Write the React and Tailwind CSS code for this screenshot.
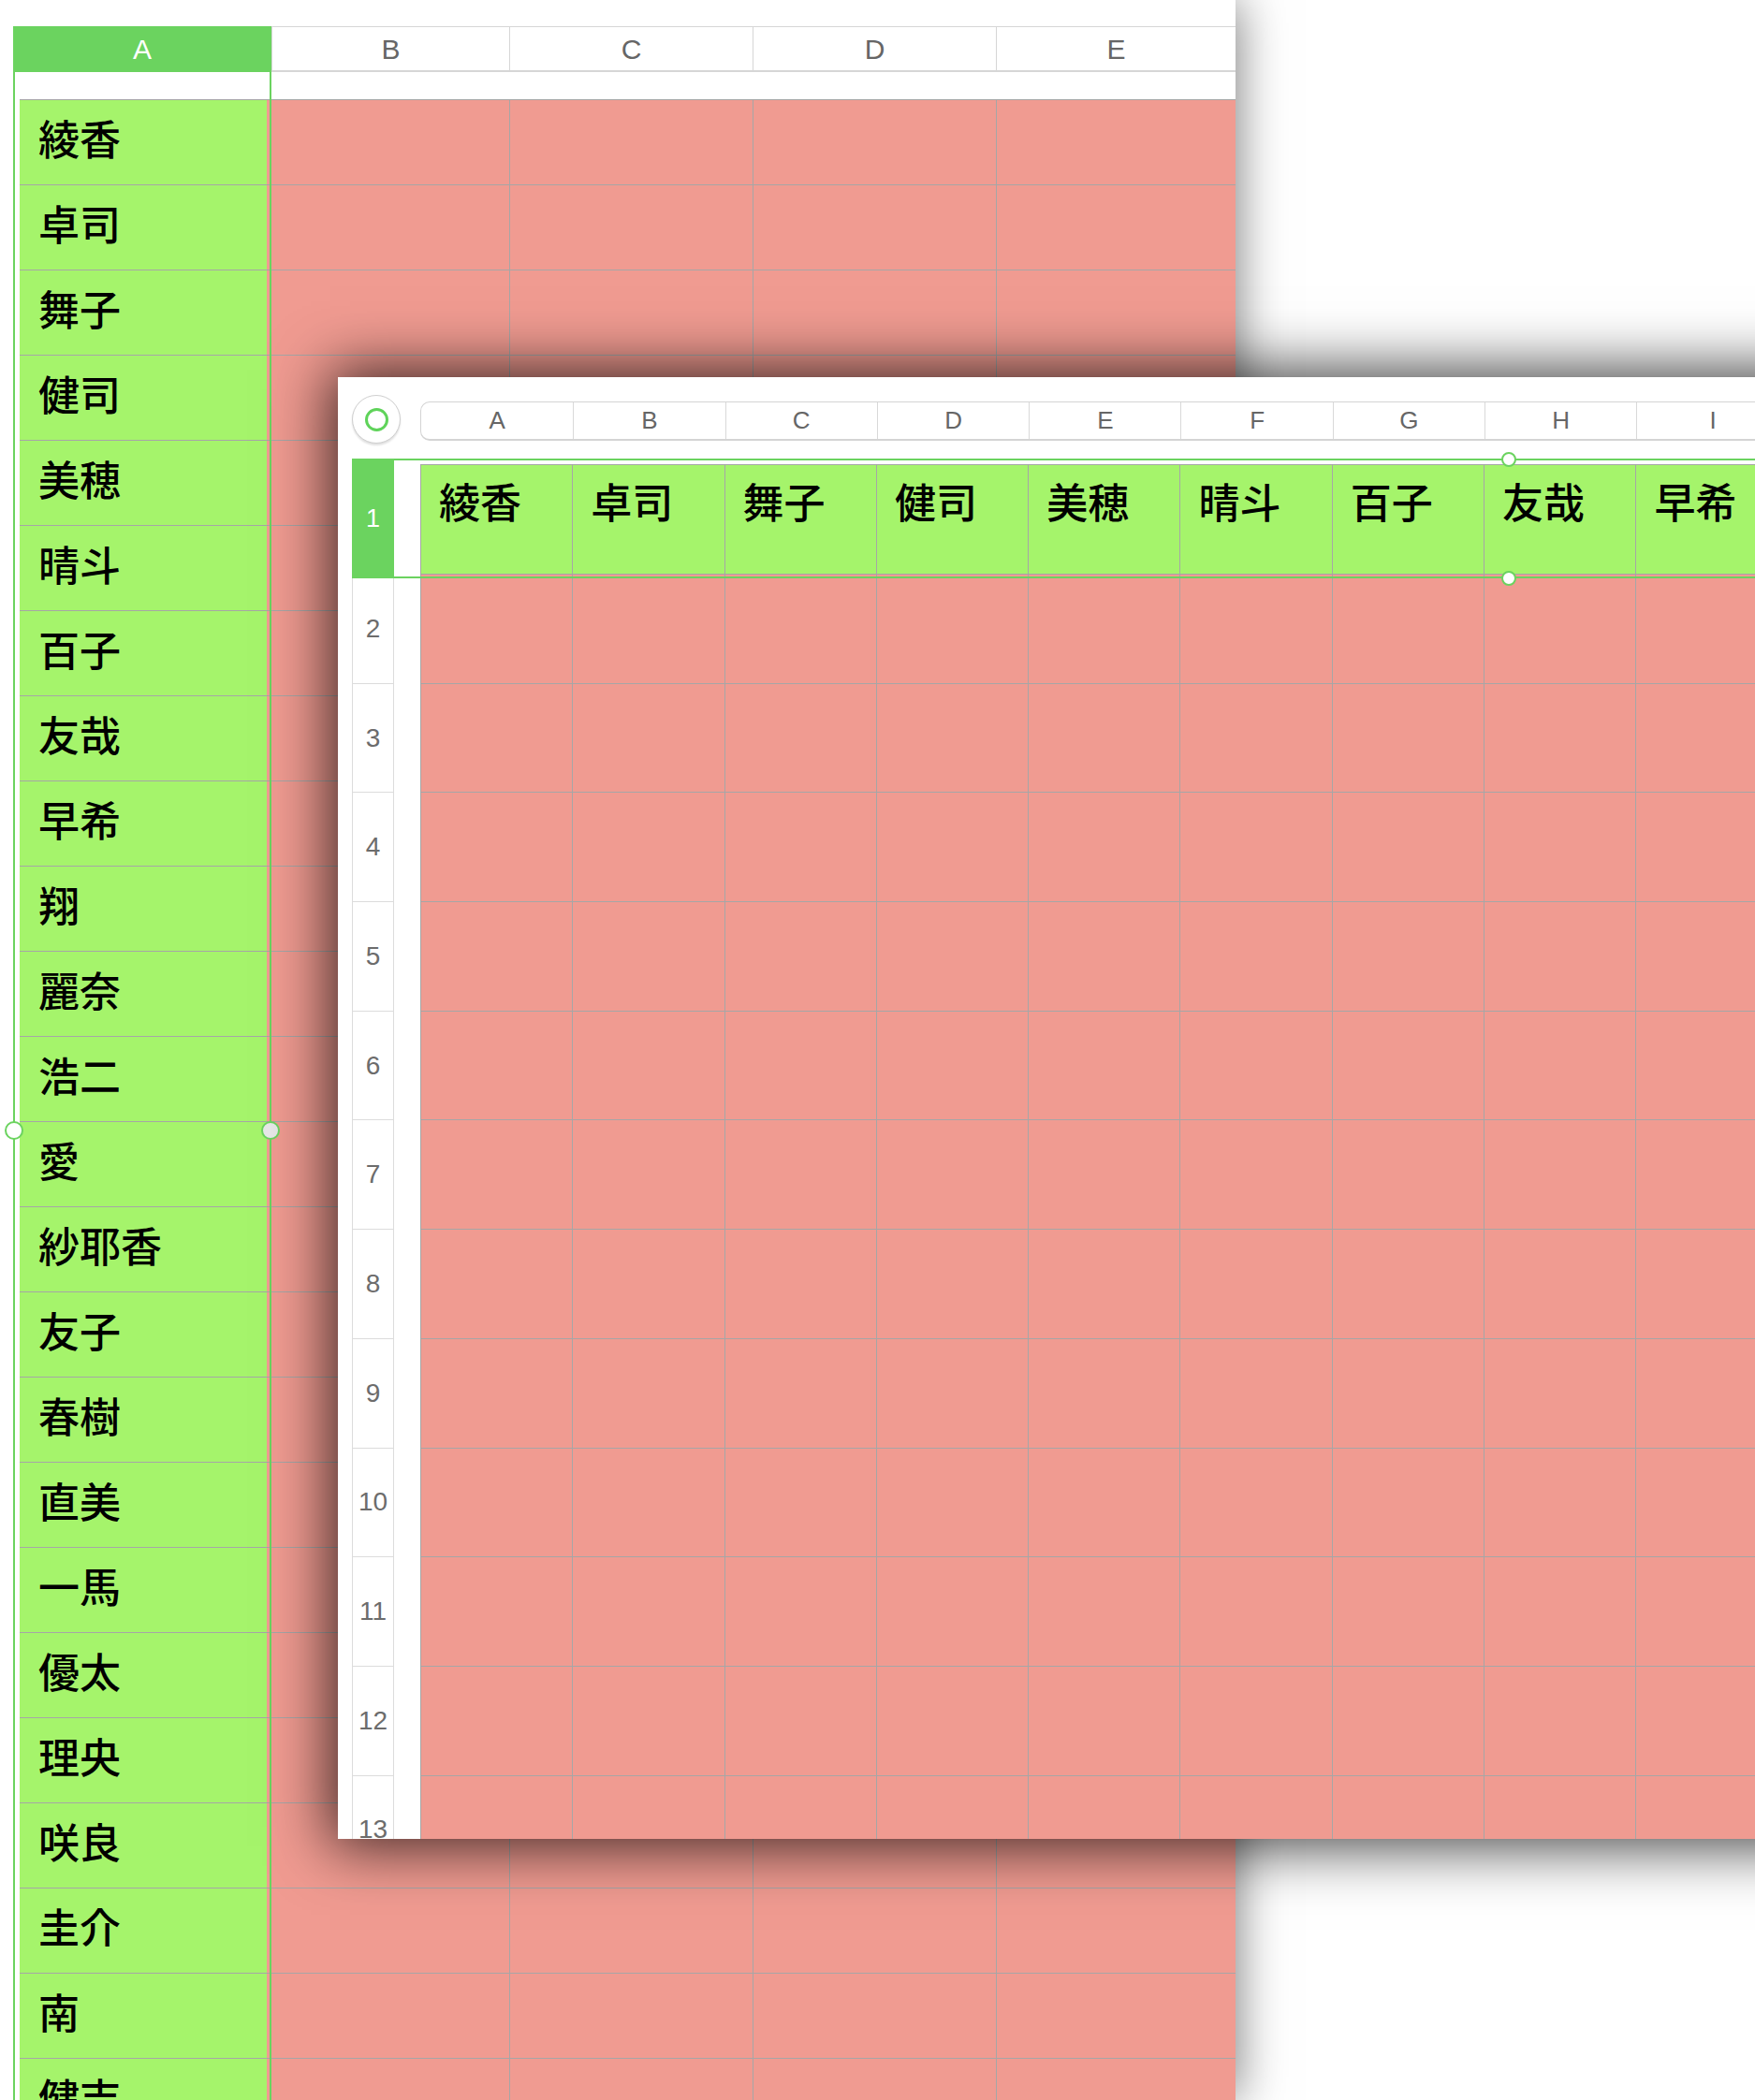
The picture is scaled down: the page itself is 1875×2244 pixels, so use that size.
import React from "react";

const names = [
    "綾香", "卓司", "舞子", "健司", "美穂", "晴斗", "百子", "友哉",
    "早希", "翔", "麗奈", "浩二", "愛", "紗耶香", "友子", "春樹",
    "直美", "一馬", "優太", "理央", "咲良", "圭介", "南", "健吉",
];

// back sheet columns after A (widths measured off the screenshot)
const backCols = [
    { label: "B", w: "w-[254px]" },
    { label: "C", w: "w-[260px]" },
    { label: "D", w: "w-[260px]" },
    { label: "E", w: "w-[256px]" },
];

const frontCols = ["A", "B", "C", "D", "E", "F", "G", "H", "I", "J"];
const frontRows = [2, 3, 4, 5, 6, 7, 8, 9, 10, 11, 12, 13];

const cjk = "font-['Hiragino_Sans','Noto_Sans_CJK_JP',sans-serif]";

const Handle = ({ className }) => (
    <div className={`absolute rounded-full border-2 border-[#6bd35f] ${className}`} />
);

const BackSheet = () => (
    <div className="relative h-full w-[1320px] bg-white shadow-[0_0_50px_rgba(0,0,0,0.55)]">
        {/* column headers */}
        <div className="flex pl-[14px] pt-[28px]">
            <div className="flex h-[49px] w-[276px] items-center justify-center bg-[#6bd35f] text-[30px] font-medium text-white">
                A
            </div>
            {backCols.map((c) => (
                <div
                    key={c.label}
                    className={`${c.w} flex h-[49px] items-center justify-center border-l border-t border-b-2 border-[#d6d6d6] text-[30px] text-[#666]`}
                >
                    {c.label}
                </div>
            ))}
        </div>
        <div className="h-[29px]" />

        {/* rows */}
        {names.map((n) => (
            <div key={n} className="flex h-[91px] pl-[14px]">
                <div className="flex w-[276px]">
                    <div className="w-[7px] bg-white" />
                    <div className={`h-full flex-1 border-t border-[#a6a6a6] bg-[#a5f46b] pl-[20px] pt-[18px] text-[44px] font-medium leading-none text-black ${cjk}`}>
                        {n}
                    </div>
                    <div className="w-[5px] border-t border-[#a6a6a6] bg-[#f09b91]" />
                </div>
                {backCols.map((c, i) => (
                    <div
                        key={c.label}
                        className={`${c.w} border-t border-[#a6a6a6] bg-[#f09b91] ${i > 0 ? "border-l" : ""}`}
                    />
                ))}
            </div>
        ))}

        {/* column A selection */}
        <div className="pointer-events-none absolute bottom-0 left-[14px] top-[77px] w-[276px] border-x-2 border-[#6bd35f]" />
        <Handle className="left-[5px] top-[1198px] h-[20px] w-[20px] bg-white" />
        <Handle className="left-[279px] top-[1198px] h-[20px] w-[20px] bg-[#e8e8e8]" />
    </div>
);

const FrontSheet = () => (
    <div className="absolute left-[361px] top-[403px] h-[1562px] w-[1600px] overflow-hidden bg-white shadow-[0_0_60px_8px_rgba(0,0,0,0.75)]">
        {/* toolbar row: select-all button + column letters */}
        <div className="flex h-[93px]">
            <div className="w-[88px] shrink-0 pl-[15px] pt-[19px]">
                <div className="flex h-[52px] w-[52px] items-center justify-center rounded-full border border-[#cfcfcf] bg-white shadow-[0_2px_2px_rgba(0,0,0,0.12)]">
                    <div className="h-[25px] w-[25px] rounded-full border-[3px] border-[#5fd35a]" />
                </div>
            </div>
            <div className="mt-[26px] flex h-[42px] rounded-l-[10px] border border-b-2 border-[#d4d4d4]">
                {frontCols.map((l, i) => (
                    <div
                        key={l}
                        className={`flex w-[162.3px] shrink-0 items-center justify-center text-[26px] text-[#666] ${i > 0 ? "border-l border-[#d9d9d9]" : ""}`}
                    >
                        {l}
                    </div>
                ))}
            </div>
        </div>

        {/* row 1: the names */}
        <div className="flex h-[117px]">
            <div className="ml-[15px] w-[45px] shrink-0 bg-[#6bd35f]" />
            <div className="w-[28px] shrink-0" />
            {frontCols.map((l, i) => (
                <div
                    key={l}
                    className={`w-[162.3px] shrink-0 border-l border-t border-[#a6a6a6] bg-[#a5f46b] pl-[19px] pt-[16px] text-[44px] font-medium leading-none text-black ${cjk}`}
                >
                    {names[i]}
                </div>
            ))}
        </div>

        {/* rows 2+ */}
        {frontRows.map((r) => (
            <div key={r} className="flex h-[116.7px]">
                <div className="ml-[15px] flex w-[45px] shrink-0 items-center justify-center border-x border-t border-[#dcdcdc] text-[28px] text-[#6c6c6c]">
                    {r}
                </div>
                <div className="w-[28px] shrink-0" />
                {frontCols.map((l) => (
                    <div
                        key={l}
                        className="w-[162.3px] shrink-0 border-l border-t border-[#a6a6a6] bg-[#f09b91]"
                    />
                ))}
            </div>
        ))}

        {/* row 1 selection */}
        <div className="pointer-events-none absolute left-[15px] right-0 top-[87px] flex h-[128px] border-y-2 border-[#6bd35f]">
            <div className="flex w-[45px] items-center justify-center bg-[#6bd35f] text-[27px] text-white">
                1
            </div>
        </div>
        <Handle className="left-[1243px] top-[80px] h-[16px] w-[16px] bg-white" />
        <Handle className="left-[1243px] top-[207px] h-[16px] w-[16px] bg-white" />
    </div>
);

export default function App() {
    return (
        <div className="relative h-[2244px] w-[1875px] overflow-hidden bg-white font-['Liberation_Sans',sans-serif]">
            <BackSheet />
            <FrontSheet />
        </div>
    );
}
